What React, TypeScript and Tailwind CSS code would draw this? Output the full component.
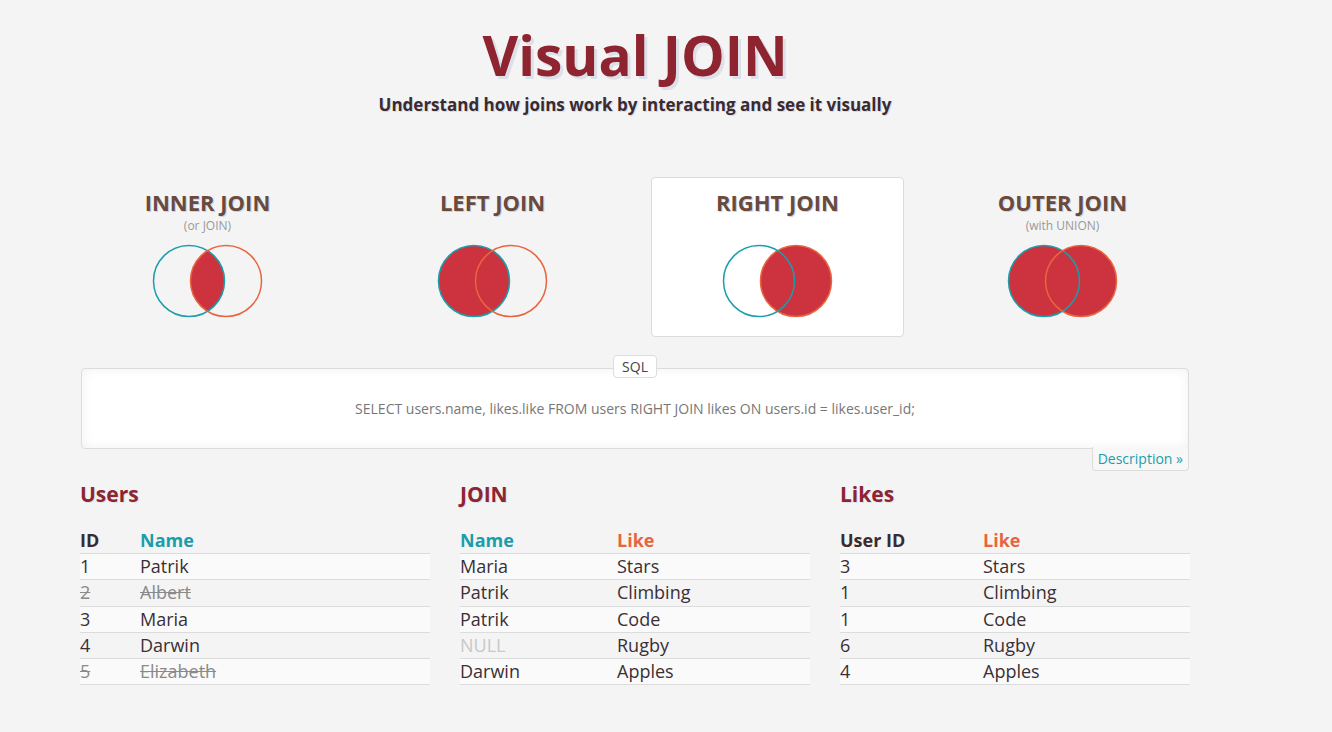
import React from "react";

type JoinType = "inner" | "left" | "right" | "outer";

const TEAL = "#1a9eab";
const ORANGE = "#e9643e";
const RED = "#cc333f";

const joins: { key: JoinType; title: string; sub?: string }[] = [
  { key: "inner", title: "INNER JOIN", sub: "(or JOIN)" },
  { key: "left", title: "LEFT JOIN" },
  { key: "right", title: "RIGHT JOIN" },
  { key: "outer", title: "OUTER JOIN", sub: "(with UNION)" },
];

const Venn = ({ type }: { type: JoinType }) => {
  const r = 35.5;
  const lx = 38;
  const rx = 75;
  const cy = 38;
  return (
    <svg width="114" height="76" viewBox="0 0 114 76">
      <defs>
        <clipPath id={`clip-${type}`}>
          <circle cx={lx} cy={cy} r={r} />
        </clipPath>
      </defs>
      {(type === "left" || type === "outer") && <circle cx={lx} cy={cy} r={r} fill={RED} />}
      {(type === "right" || type === "outer") && <circle cx={rx} cy={cy} r={r} fill={RED} />}
      {type === "inner" && (
        <circle cx={rx} cy={cy} r={r} fill={RED} clipPath={`url(#clip-${type})`} />
      )}
      {type === "right" ? (
        <>
          <circle cx={rx} cy={cy} r={r} fill="none" stroke={ORANGE} strokeWidth="1.5" />
          <circle cx={lx} cy={cy} r={r} fill="none" stroke={TEAL} strokeWidth="1.5" />
        </>
      ) : (
        <>
          <circle cx={lx} cy={cy} r={r} fill="none" stroke={TEAL} strokeWidth="1.5" />
          <circle cx={rx} cy={cy} r={r} fill="none" stroke={ORANGE} strokeWidth="1.5" />
        </>
      )}
    </svg>
  );
};

type Cell = { text: string; muted?: boolean; nul?: boolean };

const DataTable = ({
  title,
  heads,
  rows,
  firstWidth,
}: {
  title: string;
  heads: { text: string; color: string }[];
  rows: Cell[][];
  firstWidth: string;
}) => (
  <div className="w-[350px]">
    <h3 className="text-[21px] font-bold text-[#8e2430] leading-[28px] [text-shadow:1px_1px_0_#dde3ee]">
      {title}
    </h3>
    <table className="w-full mt-[19px] border-collapse text-[18px]">
      <thead>
        <tr>
          {heads.map((h, i) => (
            <th
              key={h.text}
              className={`text-left font-bold leading-[26px] p-0 ${i === 0 ? firstWidth : ""}`}
              style={{ color: h.color }}
            >
              {h.text}
            </th>
          ))}
        </tr>
      </thead>
      <tbody>
        {rows.map((row, ri) => (
          <tr key={ri} className={`border-y border-[#dcdcdc] ${ri % 2 === 0 ? "bg-[#fafafa]" : ""}`}>
            {row.map((c, ci) => (
              <td
                key={ci}
                className={`h-[26.25px] leading-[25px] p-0 ${
                  c.muted ? "line-through text-[#8a8a8a]" : c.nul ? "text-[#c8c8c8]" : "text-[#3a2f36]"
                }`}
              >
                {c.text}
              </td>
            ))}
          </tr>
        ))}
      </tbody>
    </table>
  </div>
);

const App = () => {
  const active: JoinType = "right";

  return (
    <div className="min-h-screen bg-[#f4f4f4] font-['Open_Sans',sans-serif] text-[#3a2f36]">
      <div className="w-[1110px] ml-[80px]">
        <header className="text-center pt-[19px]">
          <h1 className="text-[55px] font-bold leading-[72px] text-[#8e2430] [text-shadow:3px_3px_0_#dde0e8]">
            Visual JOIN
          </h1>
          <p className="mt-[2px] text-[17px] font-bold leading-[24px] text-[#3b2a2e] [text-shadow:1px_1px_0_#cfd9ee]">
            Understand how joins work by interacting and see it visually
          </p>
        </header>

        <div className="flex -mx-[15px] mt-[60px]">
          {joins.map((j) => (
            <div key={j.key} className="w-[285px] px-[16px]">
              <div
                className={`h-[160px] rounded-[4px] border flex flex-col items-center pt-[9px] cursor-pointer ${
                  j.key === active ? "bg-white border-[#dcdcdc]" : "border-transparent"
                }`}
              >
                <div className="text-[22px] font-bold leading-[30px] text-[#6a4a3c] [text-shadow:1px_1px_0_#c6d4ea]">
                  {j.title}
                </div>
                <div className="h-[17px] text-[12px] leading-[18px] text-[#999]">{j.sub ?? ""}</div>
                <div className="mt-[9px]">
                  <Venn type={j.key} />
                </div>
              </div>
            </div>
          ))}
        </div>

        <div className="relative mt-[31px] mx-[1px]">
          <div className="absolute left-1/2 -translate-x-1/2 -top-[13px] bg-white border border-[#dcdcdc] rounded-[4px] px-[8px] text-[14px] leading-[21px] text-[#444]">
            SQL
          </div>
          <div className="h-[81px] bg-white border border-[#dcdcdc] rounded-[4px] shadow-[inset_0_0_12px_rgba(0,0,0,0.06)] flex items-center justify-center text-[14px] text-[#777]">
            SELECT users.name, likes.like FROM users RIGHT JOIN likes ON users.id = likes.user_id;
          </div>
          <div className="flex justify-end">
            <a
              href="#"
              className="-mt-[2px] bg-[#f7f7f7] border border-[#dcdcdc] rounded-b-[4px] border-t-0 px-[5px] text-[14px] leading-[23px] text-[#1a9eab]"
            >
              Description »
            </a>
          </div>
        </div>

        <div className="flex gap-[30px] mt-[9px]">
          <DataTable
            title="Users"
            firstWidth="w-[60px]"
            heads={[
              { text: "ID", color: "#3b2a2e" },
              { text: "Name", color: TEAL },
            ]}
            rows={[
              [{ text: "1" }, { text: "Patrik" }],
              [{ text: "2", muted: true }, { text: "Albert", muted: true }],
              [{ text: "3" }, { text: "Maria" }],
              [{ text: "4" }, { text: "Darwin" }],
              [{ text: "5", muted: true }, { text: "Elizabeth", muted: true }],
            ]}
          />
          <DataTable
            title="JOIN"
            firstWidth="w-[157px]"
            heads={[
              { text: "Name", color: TEAL },
              { text: "Like", color: ORANGE },
            ]}
            rows={[
              [{ text: "Maria" }, { text: "Stars" }],
              [{ text: "Patrik" }, { text: "Climbing" }],
              [{ text: "Patrik" }, { text: "Code" }],
              [{ text: "NULL", nul: true }, { text: "Rugby" }],
              [{ text: "Darwin" }, { text: "Apples" }],
            ]}
          />
          <DataTable
            title="Likes"
            firstWidth="w-[143px]"
            heads={[
              { text: "User ID", color: "#3b2a2e" },
              { text: "Like", color: ORANGE },
            ]}
            rows={[
              [{ text: "3" }, { text: "Stars" }],
              [{ text: "1" }, { text: "Climbing" }],
              [{ text: "1" }, { text: "Code" }],
              [{ text: "6" }, { text: "Rugby" }],
              [{ text: "4" }, { text: "Apples" }],
            ]}
          />
        </div>
      </div>
    </div>
  );
};

export default App;
